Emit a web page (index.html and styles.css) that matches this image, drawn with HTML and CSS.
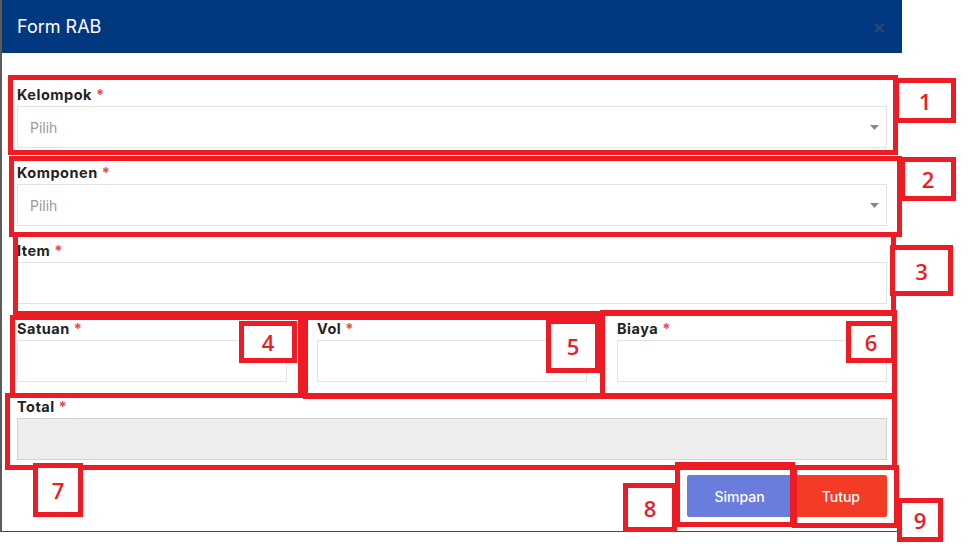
FILE: index.html
```html
<!DOCTYPE html>
<html lang="id">
<head>
    <meta charset="UTF-8">
    <meta name="viewport" content="width=device-width, initial-scale=1.0">
    <title>Form RAB</title>
    <link rel="stylesheet" href="styles.css">
</head>
<body>
    <div class="page">
        <div class="modal">
            <div class="modal-header">
                <h4 class="modal-title">Form RAB</h4>
                <span class="close">&times;</span>
            </div>
            <form class="modal-body">
                <div class="form-group">
                    <label>Kelompok <span class="req">*</span></label>
                    <div class="select">
                        <span>Pilih</span>
                        <svg width="9" height="5" viewBox="0 0 9 5"><path d="M0 0h9L4.5 5z" fill="#888"/></svg>
                    </div>
                </div>
                <div class="form-group">
                    <label>Komponen <span class="req">*</span></label>
                    <div class="select">
                        <span>Pilih</span>
                        <svg width="9" height="5" viewBox="0 0 9 5"><path d="M0 0h9L4.5 5z" fill="#888"/></svg>
                    </div>
                </div>
                <div class="form-group">
                    <label for="item">Item <span class="req">*</span></label>
                    <input type="text" id="item" class="form-control">
                </div>
                <div class="row">
                    <div class="form-group">
                        <label for="satuan">Satuan <span class="req">*</span></label>
                        <input type="text" id="satuan" class="form-control">
                    </div>
                    <div class="form-group">
                        <label for="vol">Vol <span class="req">*</span></label>
                        <input type="text" id="vol" class="form-control">
                    </div>
                    <div class="form-group">
                        <label for="biaya">Biaya <span class="req">*</span></label>
                        <input type="text" id="biaya" class="form-control">
                    </div>
                </div>
                <div class="form-group">
                    <label for="total">Total <span class="req">*</span></label>
                    <input type="text" id="total" class="form-control" readonly>
                </div>
                <div class="actions">
                    <button type="button" class="btn btn-primary">Simpan</button>
                    <button type="button" class="btn btn-danger">Tutup</button>
                </div>
            </form>
        </div>

        <!-- annotation marks -->
        <div class="mark" style="left:8px;top:75px;width:890px;height:80px"></div>
        <div class="mark num" style="left:894px;top:78px;width:62px;height:45px">1</div>
        <div class="mark" style="left:9px;top:156px;width:893px;height:81px"></div>
        <div class="mark num" style="left:900px;top:157px;width:56px;height:44px">2</div>
        <div class="mark" style="left:13px;top:232px;width:883px;height:84px"></div>
        <div class="mark num" style="left:890px;top:245px;width:63px;height:51px">3</div>
        <div class="mark" style="left:10px;top:315px;width:293px;height:83px"></div>
        <div class="mark num" style="left:239px;top:321px;width:58px;height:42px">4</div>
        <div class="mark" style="left:303px;top:315px;width:302px;height:84px"></div>
        <div class="mark num" style="left:546px;top:319px;width:54px;height:54px">5</div>
        <div class="mark" style="left:600px;top:310px;width:297px;height:89px"></div>
        <div class="mark num" style="left:846px;top:321px;width:50px;height:42px">6</div>
        <div class="mark" style="left:5px;top:393px;width:892px;height:77px"></div>
        <div class="mark num" style="left:33px;top:463px;width:50px;height:54px">7</div>
        <div class="mark" style="left:675px;top:462px;width:120px;height:65px"></div>
        <div class="mark num" style="left:623px;top:483px;width:54px;height:49px">8</div>
        <div class="mark" style="left:792px;top:465px;width:107px;height:63px"></div>
        <div class="mark num" style="left:897px;top:498px;width:46px;height:44px">9</div>
    </div>
</body>
</html>
```

FILE: styles.css
```css
:root {
    --header-blue: #02387f;
    --border: #e2e2e2;
    --text: #222;
    --req: #f0443a;
    --mark-red: #ed1c24;
}

body {
    margin: 0;
    font-family: Inter, "Liberation Sans", sans-serif;
    background-color: #fff;
    color: var(--text);
}

.page {
    position: relative;
    width: 970px;
    height: 550px;
    overflow: hidden;
}

.modal {
    width: 900px;
    border-left: 2px solid #5b5b5b;
    border-bottom: 1px solid #4a4a4a;
    background-color: #fff;
}

.modal-header {
    height: 53px;
    background-color: var(--header-blue);
    display: flex;
    align-items: center;
    justify-content: space-between;
    padding: 0 16px 0 15px;
}

.modal-title {
    margin: 0;
    font-size: 18px;
    font-weight: 400;
    color: #fff;
}

.close {
    font-size: 20px;
    font-weight: 700;
    color: #26467a;
    line-height: 1;
}

.modal-body {
    display: block;
    padding: 33px 15px 14px;
}

.form-group {
    margin-bottom: 16px;
}

label {
    display: block;
    font-size: 14.5px;
    font-weight: 700;
    line-height: 18px;
    letter-spacing: 0.5px;
    margin-bottom: 2px;
    color: var(--text);
}

.req {
    color: var(--req);
}

.select,
.form-control {
    box-sizing: border-box;
    width: 100%;
    height: 42px;
    border: 1px solid var(--border);
    background-color: #fff;
    border-radius: 0;
    font-family: inherit;
    font-size: 14px;
}

.select {
    display: flex;
    align-items: center;
    justify-content: space-between;
    padding: 0 7px 0 12px;
    color: #9a9a9a;
}

.form-control {
    display: block;
    padding: 0 12px;
    outline: none;
}

.form-control[readonly] {
    background-color: #eeeeee;
    border-color: #d4d4d4;
}

.row {
    display: grid;
    grid-template-columns: repeat(3, 1fr);
    column-gap: 30px;
}

.actions {
    display: flex;
    justify-content: flex-end;
    gap: 3px;
    margin-top: -1px;
}

.btn {
    height: 42px;
    padding: 0 27px;
    border: none;
    border-radius: 2px;
    font-family: inherit;
    font-size: 14px;
    font-weight: 500;
    color: #fff;
    cursor: pointer;
}

.btn-primary {
    background-color: #6a7cdc;
}

.btn-danger {
    background-color: #f33b25;
}

/* red annotation boxes drawn over the form */
.mark {
    position: absolute;
    box-sizing: border-box;
    border: 5px solid var(--mark-red);
}

.mark.num {
    background-color: #fff;
    display: flex;
    align-items: center;
    justify-content: center;
    font-family: "Open Sans", sans-serif;
    font-size: 22px;
    font-weight: 600;
    color: var(--mark-red);
}
```
